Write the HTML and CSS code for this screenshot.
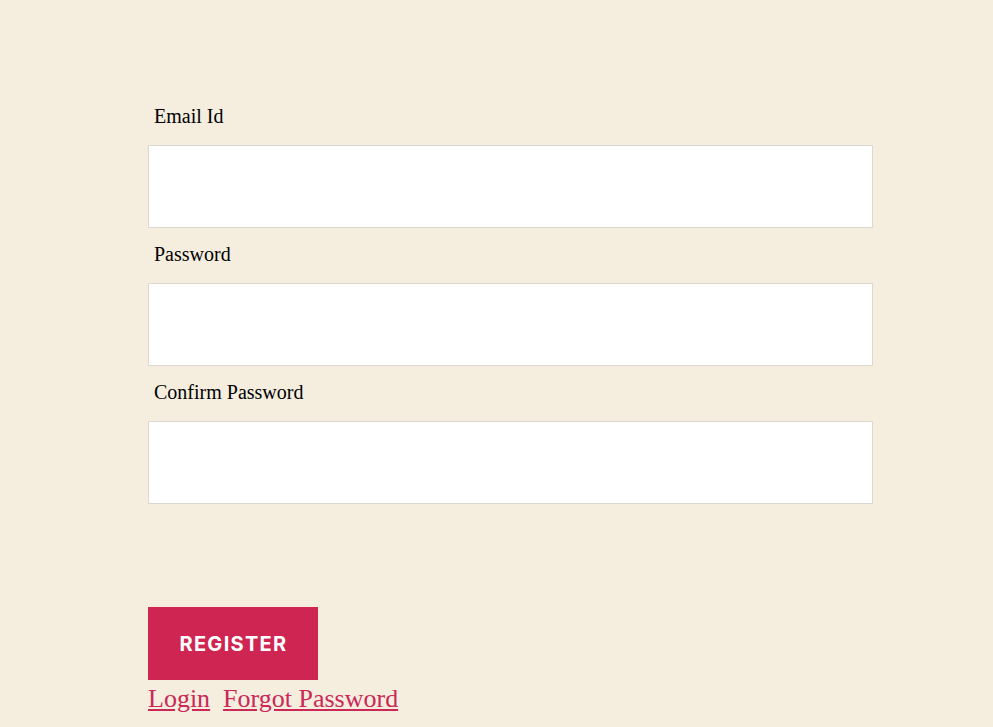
FILE: index.html
```html
<!DOCTYPE html>
<html>
<head>
<meta charset="utf-8">
<link rel="stylesheet" href="styles.css">
</head>
<body>
<form class="form">
  <div class="field">
    <label class="label">Email Id</label>
    <input class="input" type="email">
  </div>
  <div class="field">
    <label class="label">Password</label>
    <input class="input" type="password">
  </div>
  <div class="field">
    <label class="label">Confirm Password</label>
    <input class="input" type="password">
  </div>
  <button class="btn" type="button">REGISTER</button>
  <div class="links">
    <a class="link" href="#">Login</a>
    <a class="link" href="#">Forgot Password</a>
  </div>
</form>
</body>
</html>
```
FILE: styles.css
```css
html, body {
  margin: 0;
  padding: 0;
  background: #f5eedf;
}
body {
  font-family: "Liberation Serif", "Times New Roman", serif;
  color: #000;
}
.form {
  width: 725px;
  margin: 0 0 0 148px;
  padding-top: 104px;
  display: flex;
  flex-direction: column;
}
.field {
  display: flex;
  flex-direction: column;
  margin-bottom: 14px;
}
.label {
  font-size: 20px;
  line-height: 24px;
  padding-left: 6px;
  margin-bottom: 17px;
}
.input {
  box-sizing: border-box;
  width: 725px;
  height: 83px;
  margin: 0;
  border: 1px solid #dcd8cf;
  background: #fff;
  outline: none;
}
.btn {
  align-self: flex-start;
  margin-top: 89px;
  width: 170px;
  height: 73px;
  border: none;
  background: #cf2553;
  color: #fff;
  font-family: Inter, "Liberation Sans", sans-serif;
  font-weight: 700;
  font-size: 20px;
  letter-spacing: 1.3px;
  padding: 0 0 0 1px;
  cursor: pointer;
}
.links {
  margin-top: 4px;
  display: flex;
  gap: 13px;
  font-size: 26px;
  line-height: 30px;
}
.link {
  color: #cb2757;
  text-decoration: underline;
}
```
